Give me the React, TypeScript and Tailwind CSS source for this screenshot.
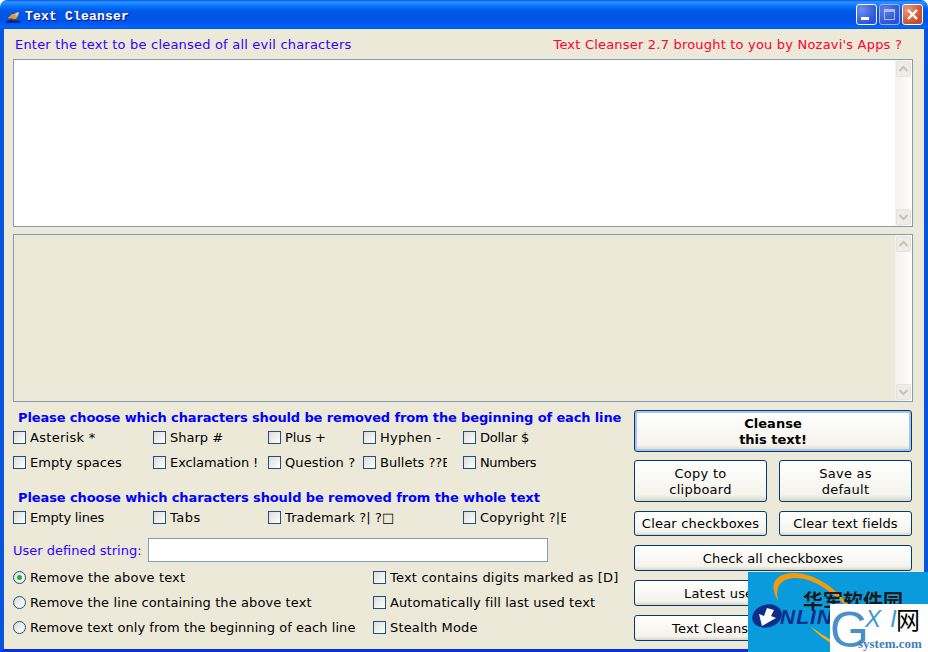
import React from "react";

const FONT = "font-['DejaVu_Sans','Liberation_Sans',sans-serif]";

function Check({ label, cls }: { label: string; cls?: string }) {
  return (
    <div className="flex items-center h-[17px] overflow-hidden whitespace-nowrap">
      <span className="w-[13px] h-[13px] shrink-0 border border-[#1c5180] bg-[linear-gradient(135deg,#dcdcd7,#ffffff)]" />
      <span className={`ml-[4px] text-[13px] leading-[17px] text-black overflow-hidden ${cls ?? ""}`}>{label}</span>
    </div>
  );
}

function Radio({ label, on, cls }: { label: string; on?: boolean; cls?: string }) {
  return (
    <div className="flex items-center h-[17px] whitespace-nowrap">
      <span className="w-[13px] h-[13px] shrink-0 rounded-full border border-[#1c5180] bg-[linear-gradient(135deg,#dcdcd7,#ffffff)] flex items-center justify-center">
        {on && <span className="w-[5px] h-[5px] rounded-full bg-[#2fa83c]" />}
      </span>
      <span className={`ml-[4px] text-[13px] leading-[17px] text-black ${cls ?? ""}`}>{label}</span>
    </div>
  );
}

function Btn({ children, className, primary }: { children: React.ReactNode; className: string; primary?: boolean }) {
  return (
    <button
      className={`rounded-[3px] border border-[#003c74] bg-[linear-gradient(180deg,#ffffff,#f4f3ec_85%,#d9d6c8)] text-[13px] leading-[16px] text-black text-center ${
        primary ? "font-bold shadow-[inset_0_0_0_2px_#a9c3ee]" : ""
      } ${className}`}
    >
      {children}
    </button>
  );
}

function ScrollBtn({ up }: { up?: boolean }) {
  return (
    <div className="w-[15px] h-[16px] mx-auto rounded-[2px] border border-[#e6e4d8] bg-[#eeede5] flex items-center justify-center">
      <svg width="11" height="8" viewBox="0 0 11 8">
        <path
          d={up ? "M1.5 6 L5.5 2 L9.5 6" : "M1.5 2 L5.5 6 L9.5 2"}
          fill="none"
          stroke="#c3c3bb"
          strokeWidth="2"
        />
      </svg>
    </div>
  );
}

function TextBox({ bg }: { bg: string }) {
  return (
    <div className={`h-[168px] w-[900px] border border-[#7f9db9] flex justify-end ${bg}`}>
      <div className="w-[17px] h-full flex flex-col justify-between py-[1px] bg-[linear-gradient(90deg,#f3f1ec,#fefefb)]">
        <ScrollBtn up />
        <ScrollBtn />
      </div>
    </div>
  );
}

function Broom() {
  return (
    <svg width="15" height="11" viewBox="0 0 15 11" className="mt-[2px]">
      <path d="M2 6 L6 2 L10 2 L12 0 L13 1 L12 4 L10 7 L3 7 Z" fill="#ee9a22" />
      <path d="M8 2 L12 0 L13 1 L11 4 Z" fill="#c9c9c9" />
      <path d="M3 6 L8 6 L6 7 L3 7 Z" fill="#b8660f" />
      <path d="M0 10 L2 8 L3 9 L5 7 L7 9 L9 8 L11 9 L13 8 L14 10 L14 11 L0 11 Z" fill="#0a2478" />
    </svg>
  );
}

function WindowButtons() {
  return (
    <div className="flex gap-[2px] items-center">
      <div className="w-[21px] h-[21px] rounded-[3px] border border-white bg-[radial-gradient(circle_at_25%_25%,#6f8ff0,#2a52d8_75%)] flex items-end pl-[4px] pb-[4px]">
        <span className="w-[8px] h-[3px] bg-white" />
      </div>
      <div className="w-[21px] h-[21px] rounded-[3px] border border-[#9db4ee] bg-[radial-gradient(circle_at_25%_25%,#5f7fe8,#2a52d8_75%)] flex items-center justify-center">
        <span className="w-[11px] h-[11px] border border-[#a9bdf2] border-t-[3px]" />
      </div>
      <div className="w-[21px] h-[21px] rounded-[3px] border border-white bg-[radial-gradient(circle_at_25%_25%,#e8997c,#c94a24_75%)] flex items-center justify-center">
        <svg width="13" height="13" viewBox="0 0 13 13">
          <path d="M2 2 L11 11 M11 2 L2 11" stroke="#ffffff" strokeWidth="2.4" />
        </svg>
      </div>
    </div>
  );
}

function Watermark() {
  return (
    <div className="absolute left-[748px] top-[572px] w-[180px] h-[80px] bg-[#0a9bdc] overflow-hidden">
      <svg className="absolute left-0 top-0" width="180" height="80" viewBox="0 0 180 80">
        <path d="M31 30 C19 12 28 1 46 1 C68 1 92 18 106 42 C88 22 66 6 48 6 C32 6 26 16 31 30 Z" fill="#f59a0c" />
        <path d="M62 54 C70 60 78 65 90 72 L84 72 C76 67 68 61 62 54 Z" fill="#f5b40c" />
        <ellipse cx="19" cy="44" rx="15" ry="11.5" fill="#0d2d8c" transform="rotate(-15 19 44)" />
        <path d="M19 36 L26 38 L23 44 L28 46 L14 54 L11 42 L16 44 Z" fill="#ffffff" />
      </svg>
      <div className="absolute left-[55px] top-[17px] text-[20px] leading-[24px] font-bold text-[#1a1a1a] font-['Noto_Sans_CJK_SC',sans-serif] whitespace-nowrap">
        华军软件园
      </div>
      <div className="absolute left-[32px] top-[33px] text-[21px] leading-[24px] tracking-[1px] font-bold italic text-[#0d2d8c] font-['Liberation_Sans',sans-serif] whitespace-nowrap">
        NLINE
      </div>
      <div className="absolute left-[82px] top-[32px] w-[98px] h-[48px] bg-white overflow-hidden">
        <div className="absolute left-[0px] top-[-2px] text-[50px] leading-[56px] text-[#4a90c8] font-['Liberation_Sans',sans-serif]">
          G
        </div>
        <div className="absolute left-[35px] top-[0px] text-[24px] leading-[30px] italic text-[#3f9ad6] tracking-[9px] font-['Liberation_Sans',sans-serif]">
          XI
        </div>
        <div className="absolute left-[66px] top-[-1px] text-[24px] leading-[32px] text-black font-['Noto_Sans_CJK_SC',sans-serif]">
          网
        </div>
        <div className="absolute left-[28px] top-[32px] text-[13px] leading-[16px] font-bold text-[#3f7fb8] font-['Liberation_Serif',serif] whitespace-nowrap">
          system.com
        </div>
      </div>
    </div>
  );
}

export default function App() {
  return (
    <div className={`relative w-[928px] h-[652px] flex flex-col overflow-hidden bg-white ${FONT}`}>
      <div className="h-[29px] shrink-0 rounded-t-[7px] flex items-center justify-between pl-[6px] pr-[5px] bg-[linear-gradient(180deg,#0058ee_0px,#3593ff_2px,#288eff_3px,#127dff_5px,#036ffc_7px,#0262ee_9px,#0057e5_12px,#0054e3_18px,#0055eb_22px,#005bf5_25px,#026afe_27px,#0052d6_29px)]">
        <div className="flex items-center gap-[4px] pt-[4px]">
          <Broom />
          <span className="text-[13px] leading-[16px] font-bold tracking-[0.2px] text-white font-['Liberation_Mono',monospace] [text-shadow:1px_1px_0_#0f1089]">
            Text Cleanser
          </span>
        </div>
        <WindowButtons />
      </div>

      <div className="flex-1 flex flex-col bg-[#ece9d8] border-x-[4px] border-b-[3px] border-x-[#0855dd] border-b-[#0831d9] pl-[9px]">
        <div className="h-[30px] w-[889px] flex items-center justify-between pl-[2px] text-[13px] leading-[17px]">
          <span className="text-[#3300ff] tracking-[0.2px]">Enter the text to be cleansed of all evil characters</span>
          <span className="text-[#ff0033] tracking-[0.2px]">Text Cleanser 2.7 brought to you by Nozavi's Apps ?</span>
        </div>
        <TextBox bg="bg-white" />
        <div className="h-[7px]" />
        <TextBox bg="bg-[#ece9d8]" />

        <div className="flex mt-[8px]">
          <div className="w-[621px] flex flex-col">
            <div className="h-[15px] pl-[5px] text-[13px] leading-[15px] font-bold text-[#0000ff] tracking-[-0.135px] whitespace-nowrap">
              Please choose which characters should be removed from the beginning of each line
            </div>
            <div className="grid grid-cols-[140px_115px_95px_100px_120px] grid-rows-[17px_17px] gap-y-[8px] mt-[4px]">
              <Check label="Asterisk *" cls="tracking-[0.3px]" />
              <Check label="Sharp #" />
              <Check label="Plus +" cls="tracking-[-0.1px]" />
              <Check label="Hyphen -" cls="tracking-[0.25px]" />
              <Check label="Dollar $" cls="tracking-[-0.25px]" />
              <Check label="Empty spaces" cls="tracking-[0.08px]" />
              <Check label="Exclamation !" cls="tracking-[-0.08px]" />
              <Check label="Question ?" cls="tracking-[0.1px]" />
              <Check label="Bullets ??E" cls="w-[67px]" />
              <Check label="Numbers" cls="tracking-[-0.4px]" />
            </div>
            <div className="h-[15px] mt-[19px] pl-[5px] text-[13px] leading-[15px] font-bold text-[#0000ff] tracking-[-0.1px] whitespace-nowrap">
              Please choose which characters should be removed from the whole text
            </div>
            <div className="grid grid-cols-[140px_115px_195px_120px] h-[17px] mt-[4px]">
              <Check label="Empty lines" cls="tracking-[-0.2px]" />
              <Check label="Tabs" cls="tracking-[0.5px]" />
              <Check label="Trademark ?| ?□" cls="tracking-[0.1px]" />
              <Check label="Copyright ?|E" cls="w-[86px] tracking-[0.1px]" />
            </div>
            <div className="flex items-center h-[24px] mt-[12px]">
              <span className="text-[13px] leading-[17px] text-[#3300ff] whitespace-nowrap w-[135px]">User defined string:</span>
              <div className="w-[400px] h-[24px] border border-[#7f9db9] bg-white" />
            </div>
            <div className="grid grid-cols-[360px_250px] grid-rows-[17px_17px_17px] gap-y-[8px] mt-[7px] whitespace-nowrap">
              <Radio label="Remove the above text" on cls="tracking-[0.15px]" />
              <Check label="Text contains digits marked as [D]" cls="tracking-[0.2px]" />
              <Radio label="Remove the line containing the above text" cls="tracking-[0.1px]" />
              <Check label="Automatically fill last used text" cls="tracking-[0.1px]" />
              <Radio label="Remove text only from the beginning of each line" cls="tracking-[0.06px]" />
              <Check label="Stealth Mode" cls="tracking-[0.15px]" />
            </div>
          </div>

          <div className="w-[278px] flex flex-col">
            <Btn primary className="w-[278px] h-[42px] pt-[1px]">
              Cleanse<br />this text!
            </Btn>
            <div className="flex justify-between mt-[8px]">
              <Btn className="w-[133px] h-[42px] pt-[1px] tracking-[0.25px]">Copy to<br />clipboard</Btn>
              <Btn className="w-[133px] h-[42px] pt-[1px] tracking-[0.25px]">Save as<br />default</Btn>
            </div>
            <div className="flex justify-between mt-[9px]">
              <Btn className="w-[133px] h-[25px] tracking-[0.2px]">Clear checkboxes</Btn>
              <Btn className="w-[133px] h-[25px] tracking-[0.1px]">Clear text fields</Btn>
            </div>
            <Btn className="w-[278px] h-[26px] mt-[9px] pt-[1px] tracking-[0.05px]">Check all checkboxes</Btn>
            <Btn className="w-[278px] h-[26px] mt-[9px] pt-[1px] !text-left pl-[49px] tracking-[0.2px]">Latest use</Btn>
            <Btn className="w-[278px] h-[26px] mt-[9px] pt-[1px] !text-left pl-[37px] tracking-[0.2px]">Text Cleans</Btn>
          </div>
        </div>
      </div>

      <Watermark />
    </div>
  );
}
